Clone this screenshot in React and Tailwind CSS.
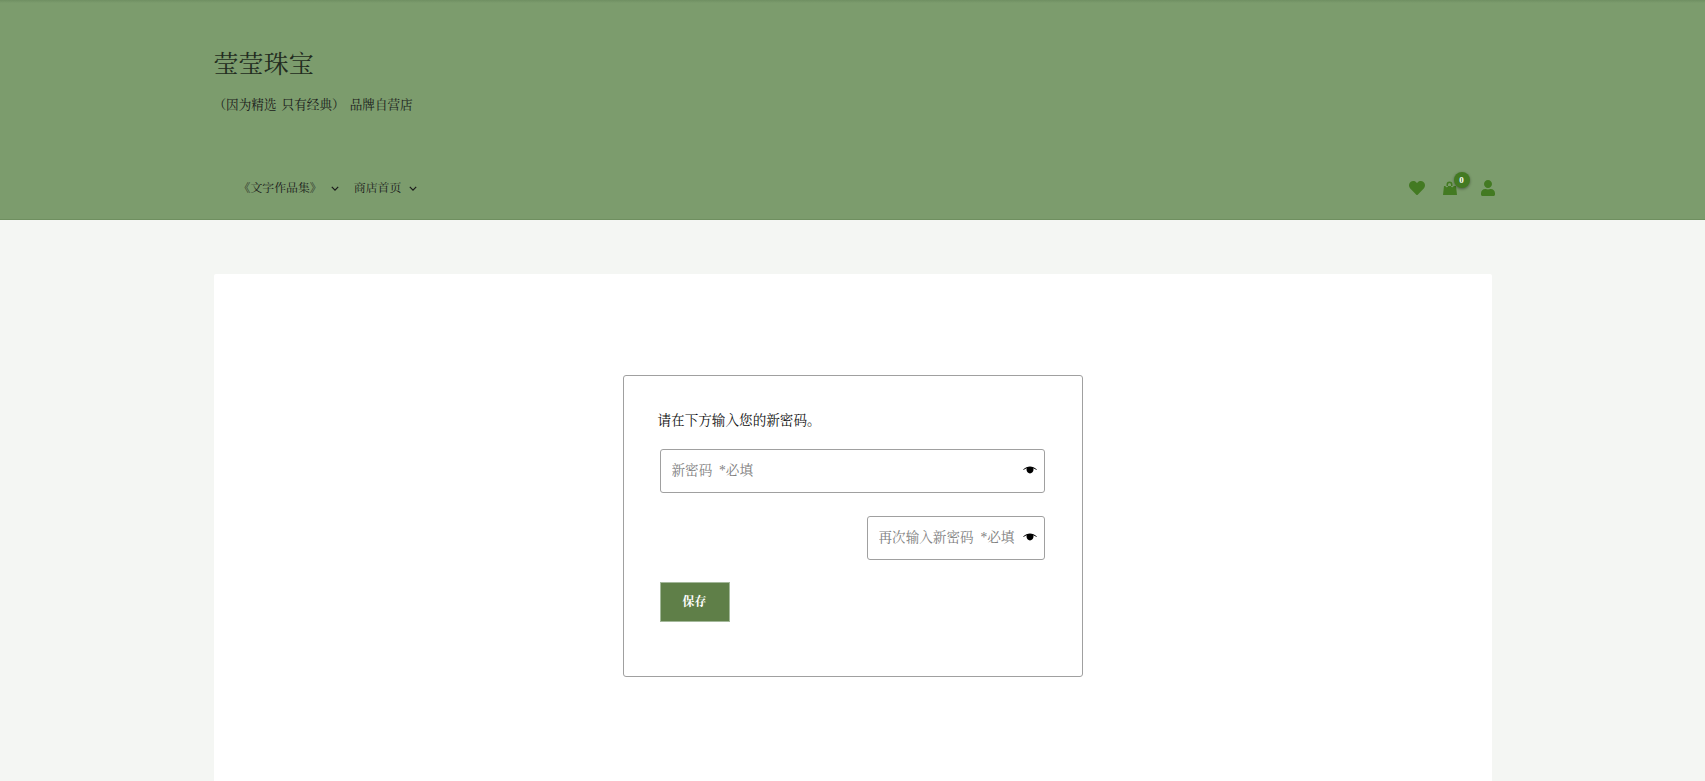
import { FaHeart, FaUser } from "react-icons/fa";

const serif = "[font-family:'Liberation_Serif','Noto_Serif_CJK_SC','Noto_Sans_CJK_SC',serif]";

function EyeIcon() {
  return (
    <svg viewBox="0 0 16 8" className="absolute right-[8px] top-[17px] h-[8px] w-[14px]" fill="#000">
      <path d="M0 3.6C2.6 1 5.4 0 8 0s5.4 1 8 3.6l-.4.5C14 3 12.8 2.4 11.7 2c.2.5.3 1 .3 1.5C12 5.9 10.200 8 8 8S4 5.9 4 3.500c0-.5.1-1 .3-1.500C3.200 2.400 2 3 .4 4.100z" />
    </svg>
  );
}

function BagIcon() {
  return (
    <svg viewBox="0 0 14 14" className="h-[14px] w-[14px]" fill="currentColor">
      <path d="M3.500 5V3.500a3 3 0 0 1 6 0V5H8V3.500a1.500 1.500 0 0 0-3 0V5z" />
      <path d="M1 5h1.500a1 1 0 0 0 2.500 0h3a1 1 0 0 0 2.500 0H13l1 9H0z" />
    </svg>
  );
}

function PasswordField({ placeholder, className }) {
  return (
    <div className={`relative h-[44px] ${className}`}>
      <input
        type="password"
        placeholder={placeholder}
        className="h-full w-full rounded-[3px] border border-[#a0a0a0] bg-white pl-[11px] pr-[28px] text-[13.6px] outline-none placeholder:text-[#808080]"
      />
      <EyeIcon />
    </div>
  );
}

export default function App() {
  return (
    <div className={`h-screen overflow-hidden bg-[#f4f6f3] text-[#111] ${serif}`}>
      <header className="h-[220px] border-b border-[#6f8f60] bg-[#7c9c6d] bg-[linear-gradient(to_bottom,#6f8f62,#7c9c6d_3px)]">
        <div className="mx-auto flex h-full w-[1278px] flex-col">
          <h1 className="mt-[48px] text-[25px] leading-[33px] font-normal tracking-[0.1px] text-[#222b20]">莹莹珠宝</h1>
          <p className="mt-[14px] text-[12.6px] leading-[20px] whitespace-pre text-[#1a1a1a] [word-spacing:2px]">（因为精选 只有经典） 品牌自营店</p>
          <nav className="mt-[63px] flex items-center justify-between">
            <ul className="flex items-center pl-[25px] text-[11.9px] leading-[20px] text-[#1a1a1a]">
              <li className="flex items-center">
                《文字作品集》
                <Chevron className="ml-[9px]" />
              </li>
              <li className="ml-[15px] flex items-center">
                商店首页
                <Chevron className="ml-[8px]" />
              </li>
            </ul>
            <div className="relative -mr-[4px] flex items-center text-[#437a22]">
              <FaHeart className="h-[16px] w-[16px]" />
              <div className="relative ml-[18px]">
                <BagIcon />
                <span className="absolute -top-[9px] left-[11px] flex h-[16px] w-[16px] items-center justify-center rounded-full bg-[#437a22] text-[9px] leading-none font-bold text-white shadow-[0_1px_3px_rgba(0,0,0,0.4)]">
                  0
                </span>
              </div>
              <FaUser className="ml-[23px] h-[16px] w-[16px]" />
            </div>
          </nav>
        </div>
      </header>

      <main className="mx-auto mt-[54px] h-[600px] w-[1278px] rounded-t-[2px] bg-white pt-[101px]">
        <section className="mx-auto box-border h-[302px] w-[460px] rounded-[3px] border border-[#a0a0a0] pl-[34px] pr-[37px] pt-[35px]">
          <p className="text-[13.6px] leading-[20px] text-[#111]">请在下方输入您的新密码。</p>
          <PasswordField placeholder="新密码  *必填" className="ml-[2px] mt-[18px] w-[385px]" />
          <PasswordField placeholder="再次输入新密码  *必填" className="ml-auto mt-[23px] w-[178px]" />
          <button className="ml-[2px] mt-[22px] block h-[40px] w-[70px] border border-[#a3b89a] bg-[#5f7f48] text-[12px] font-bold text-white">
            保存
          </button>
        </section>
      </main>
    </div>
  );
}

function Chevron({ className }) {
  return (
    <svg viewBox="0 0 10 6" className={`h-[5px] w-[8px] ${className}`} fill="none" stroke="#1a1a1a" strokeWidth="1.500">
      <path d="M1 1l4 4 4-4" />
    </svg>
  );
}
